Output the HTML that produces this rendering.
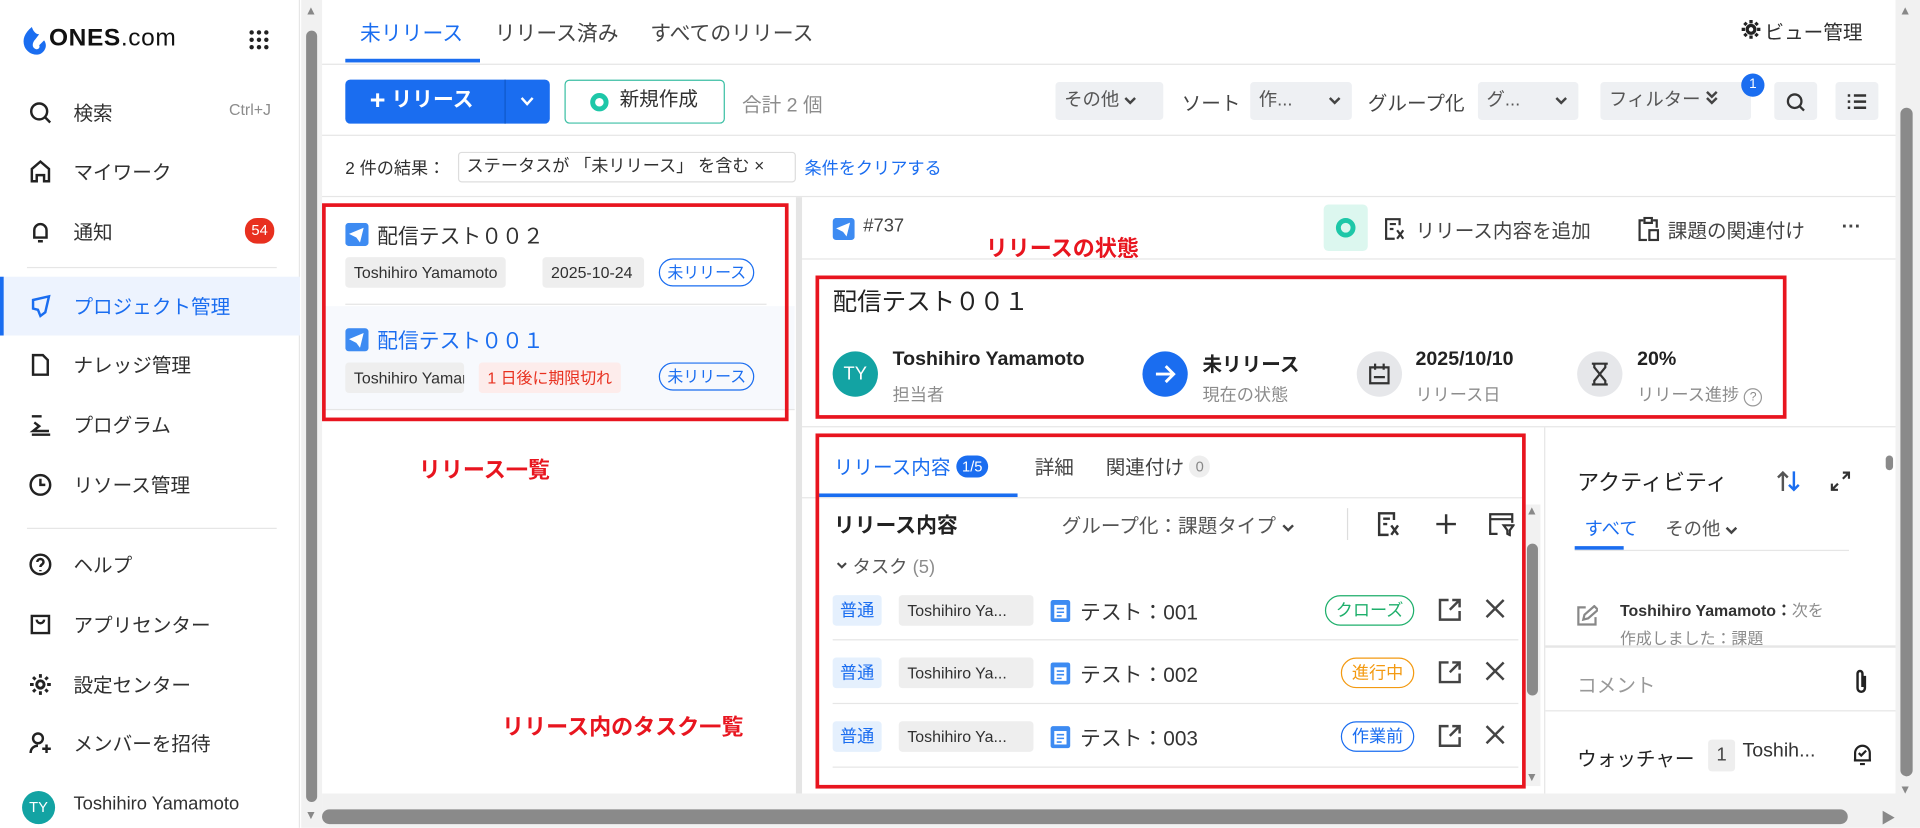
<!DOCTYPE html>
<html><head><meta charset="utf-8">
<style>
*{box-sizing:border-box;margin:0;padding:0}
html,body{width:1920px;height:828px;overflow:hidden;background:#fff}
body{font-family:"Liberation Sans","Noto Sans CJK JP",sans-serif;color:#303030}
#w{position:absolute;left:0;top:0;width:1568px;height:676px;transform:scale(1.22449);transform-origin:0 0;background:#fff}
.a{position:absolute;white-space:nowrap}
.nav{position:absolute;left:0;width:245px;height:44px;font-size:16px;color:#303030}
.nav .t{position:absolute;left:60px;top:9px}
.nav svg{position:absolute;left:23px;top:12px}
.line{position:absolute;background:#e6e6e6}
.tag{position:absolute;white-space:nowrap;background:#eeeeee;border-radius:3px;font-size:13px;padding:0 7px;height:25px;line-height:25px;color:#303030}
.st{position:absolute;white-space:nowrap;border:1px solid #1a6df0;color:#1a6df0;border-radius:12px;font-size:13px;height:23px;line-height:21px;padding:0 6px}
.sel{position:absolute;white-space:nowrap;background:#eef0f3;border-radius:3px;height:31px;line-height:31px;font-size:15px;color:#555;padding-left:7px}
.red{color:#e8151f;font-weight:bold;font-size:18px}
.box{position:absolute;border:3px solid #e8151f}
.grey{color:#8c8c8c}
</style></head><body><div id="w">

<!-- sidebar -->
<div class="a" style="left:0;top:0;width:245px;height:676px;border-right:1px solid #e6e6e6"></div>
<svg class="a" style="left:17px;top:21px" width="22" height="26" viewBox="0 0 22 26"><path d="M9 1C3 6 1 11 3 17c2 5 8 8 13 6 4-2 6-7 3-11l-4 4c1 2-1 4-3 3-3-1-3-5 0-8l3-4c-3 0-5-3-6-6z" fill="#1a6df0"/></svg>
<div class="a" style="left:40px;top:20px;font-size:20px;font-weight:bold;color:#111;letter-spacing:.5px">ONES<span style="font-weight:normal">.com</span></div>
<svg class="a" style="left:203px;top:24px" width="17" height="17" viewBox="0 0 17 17" fill="#222"><circle cx="2.5" cy="2.5" r="1.8"/><circle cx="8.5" cy="2.5" r="1.8"/><circle cx="14.5" cy="2.5" r="1.8"/><circle cx="2.5" cy="8.5" r="1.8"/><circle cx="8.5" cy="8.5" r="1.8"/><circle cx="14.5" cy="8.5" r="1.8"/><circle cx="2.5" cy="14.5" r="1.8"/><circle cx="8.5" cy="14.5" r="1.8"/><circle cx="14.5" cy="14.5" r="1.8"/></svg>

<div class="nav" style="top:70px"><svg width="20" height="20" viewBox="0 0 20 20" fill="none" stroke="#222" stroke-width="2"><circle cx="9" cy="9" r="6.5"/><path d="M14 14l4 4"/></svg><span class="t">検索</span><span class="a grey" style="left:187px;top:12px;font-size:13px">Ctrl+J</span></div>
<div class="nav" style="top:118px"><svg width="20" height="20" viewBox="0 0 20 20" fill="none" stroke="#222" stroke-width="2"><path d="M3 18V8l7-6 7 6v10h-4v-5H7v5z"/></svg><span class="t">マイワーク</span></div>
<div class="nav" style="top:167px"><svg width="20" height="20" viewBox="0 0 20 20" fill="none" stroke="#222" stroke-width="2"><path d="M5 15V9a5 5 0 0110 0v6H4h12M8 18h4"/></svg><span class="t">通知</span><span class="a" style="left:200px;top:11px;background:#e8301f;color:#fff;font-size:12px;border-radius:10px;width:24px;height:21px;line-height:21px;text-align:center">54</span></div>
<div class="line" style="left:22px;top:218px;width:204px;height:1px"></div>
<div class="nav" style="top:226px;height:48px;background:#edf3fe;color:#1a6df0"><div class="a" style="left:0;top:0;width:3px;height:48px;background:#1a6df0"></div><svg width="20" height="20" viewBox="0 0 20 20" fill="none" stroke="#1a6df0" stroke-width="2" style="top:14px"><path d="M4 5l13-3-3 13-4 3-2-5-4-1z"/></svg><span class="t" style="top:11px">プロジェクト管理</span></div>
<div class="nav" style="top:276px"><svg width="20" height="20" viewBox="0 0 20 20" fill="none" stroke="#222" stroke-width="2"><path d="M4 2h8l4 4v12H4z"/></svg><span class="t">ナレッジ管理</span></div>
<div class="nav" style="top:325px"><svg width="20" height="20" viewBox="0 0 20 20" fill="none" stroke="#222" stroke-width="2"><path d="M3 3h8M5 8l4 3-5 4h13M3 18h15"/></svg><span class="t">プログラム</span></div>
<div class="nav" style="top:374px"><svg width="20" height="20" viewBox="0 0 20 20" fill="none" stroke="#222" stroke-width="2"><circle cx="10" cy="10" r="8"/><path d="M10 5v5h4"/></svg><span class="t">リソース管理</span></div>
<div class="line" style="left:22px;top:431px;width:204px;height:1px"></div>
<div class="nav" style="top:439px"><svg width="20" height="20" viewBox="0 0 20 20" fill="none" stroke="#222" stroke-width="2"><circle cx="10" cy="10" r="8"/><path d="M7.5 8a2.5 2.5 0 115 0c0 2-2.5 2-2.5 4M10 14.5v1"/></svg><span class="t">ヘルプ</span></div>
<div class="nav" style="top:488px"><svg width="20" height="20" viewBox="0 0 20 20" fill="none" stroke="#222" stroke-width="2"><path d="M3 3h14v14H3zM7 6a3 3 0 006 0"/></svg><span class="t">アプリセンター</span></div>
<div class="nav" style="top:537px"><svg width="20" height="20" viewBox="0 0 20 20" fill="none" stroke="#222" stroke-width="2.4"><circle cx="10" cy="10" r="3"/><path d="M10 1.5v3M10 15.5v3M1.5 10h3M15.5 10h3M4 4l2 2M14 14l2 2M4 16l2-2M14 6l2-2"/></svg><span class="t">設定センター</span></div>
<div class="nav" style="top:585px"><svg width="20" height="20" viewBox="0 0 20 20" fill="none" stroke="#222" stroke-width="2"><circle cx="8" cy="6" r="4"/><path d="M2 18c0-4 3-6 6-6M15 11v7M11.5 14.5h7"/></svg><span class="t">メンバーを招待</span></div>
<div class="a" style="left:18px;top:646px;width:27px;height:27px;border-radius:50%;background:#13a3a3;color:#fff;font-size:12px;line-height:27px;text-align:center">TY</div>
<div class="a" style="left:60px;top:648px;font-size:15px">Toshihiro Yamamoto</div>

<!-- scrollbars -->
<div class="a" style="left:246px;top:0;width:17px;height:676px;background:#f1f1f1"></div>
<div class="a" style="left:250px;top:25px;width:9px;height:630px;background:#8a8a8a;border-radius:5px"></div>
<div class="a" style="left:249px;top:4px;color:#888;font-size:10px">▲</div>
<div class="a" style="left:249px;top:661px;color:#888;font-size:10px">▼</div>
<div class="a" style="left:1548px;top:0;width:20px;height:676px;background:#f1f1f1"></div>
<div class="a" style="left:1552px;top:88px;width:10px;height:546px;background:#8a8a8a;border-radius:5px"></div>
<div class="a" style="left:1551px;top:4px;color:#888;font-size:10px">▲</div>
<div class="a" style="left:1551px;top:640px;color:#888;font-size:10px">▼</div>
<div class="a" style="left:263px;top:648px;width:1285px;height:28px;background:#f1f1f1"></div>
<div class="a" style="left:263px;top:661px;width:1246px;height:12px;background:#8a8a8a;border-radius:6px"></div>
<div class="a" style="left:1536px;top:659px;color:#888;font-size:12px">▶</div>

<!-- top tabs -->
<div class="a" style="left:294px;top:13px;font-size:17px;color:#1a6df0">未リリース</div>
<div class="a" style="left:404px;top:13px;font-size:17px;color:#444">リリース済み</div>
<div class="a" style="left:531px;top:13px;font-size:17px;color:#444">すべてのリリース</div>
<div class="a" style="left:282px;top:48px;width:110px;height:3px;background:#1a6df0"></div>
<div class="line" style="left:263px;top:52px;width:1285px;height:1px"></div>
<svg class="a" style="left:1421px;top:15px" width="18" height="18" viewBox="0 0 20 20" fill="none" stroke="#222" stroke-width="3"><circle cx="10" cy="10" r="3.5"/><path d="M10 1.5v3M10 15.5v3M1.5 10h3M15.5 10h3M4 4l2 2M14 14l2 2M4 16l2-2M14 6l2-2"/></svg>
<div class="a" style="left:1441px;top:13px;font-size:16px">ビュー管理</div>

<!-- toolbar -->
<div class="a" style="left:282px;top:65px;width:167px;height:36px;background:#1a6df0;border-radius:4px;color:#fff;font-size:17px;line-height:34px;font-weight:bold"><span style="margin-left:20px;font-size:22px;vertical-align:-2px">+</span> リリース<div class="a" style="left:130px;top:0;width:1px;height:36px;background:#0f58c9"></div><svg class="a" style="left:143px;top:14px" width="11" height="8" viewBox="0 0 11 8" fill="none" stroke="#fff" stroke-width="2"><path d="M1 1l4.5 5L10 1"/></svg></div>
<div class="a" style="left:461px;top:65px;width:131px;height:36px;border:1px solid #3bbfa4;border-radius:4px;font-size:16px;line-height:32px"><span class="a" style="left:20px;top:10px;width:15px;height:15px;border-radius:50%;border:4px solid #1ec7a8"></span><span style="margin-left:44px">新規作成</span></div>
<div class="a grey" style="left:606px;top:72px;font-size:16px">合計 2 個</div>
<div class="sel" style="left:862px;top:67px;width:88px;line-height:29px">その他 <svg width="10" height="7" viewBox="0 0 10 7" fill="none" stroke="#444" stroke-width="2"><path d="M1 1l4 4 4-4"/></svg></div>
<div class="a" style="left:965px;top:71px;font-size:16px;color:#444">ソート</div>
<div class="sel" style="left:1021px;top:67px;width:83px;line-height:29px">作... <svg class="a" style="left:64px;top:12px" width="10" height="7" viewBox="0 0 10 7" fill="none" stroke="#444" stroke-width="2"><path d="M1 1l4 4 4-4"/></svg></div>
<div class="a" style="left:1117px;top:71px;font-size:16px;color:#444">グループ化</div>
<div class="sel" style="left:1207px;top:67px;width:82px;line-height:29px">グ... <svg class="a" style="left:63px;top:12px" width="10" height="7" viewBox="0 0 10 7" fill="none" stroke="#444" stroke-width="2"><path d="M1 1l4 4 4-4"/></svg></div>
<div class="sel" style="left:1307px;top:67px;width:123px;line-height:29px">フィルター <svg width="10" height="12" viewBox="0 0 10 12" fill="none" stroke="#444" stroke-width="2"><path d="M1 1l4 4 4-4M1 6l4 4 4-4"/></svg></div>
<div class="a" style="left:1422px;top:60px;width:19px;height:19px;border-radius:50%;background:#1a6df0;color:#fff;font-size:11px;line-height:19px;text-align:center">1</div>
<div class="sel" style="left:1449px;top:67px;width:35px;padding:0"><svg class="a" style="left:9px;top:8px" width="17" height="17" viewBox="0 0 20 20" fill="none" stroke="#333" stroke-width="2.2"><circle cx="9" cy="9" r="6.5"/><path d="M14 14l4 4"/></svg></div>
<div class="sel" style="left:1499px;top:67px;width:35px;padding:0"><svg class="a" style="left:9px;top:9px" width="17" height="14" viewBox="0 0 17 14" fill="none" stroke="#333" stroke-width="2"><path d="M1 2h2M6 2h10M1 7h2M6 7h10M1 12h2M6 12h10"/></svg></div>
<div class="line" style="left:263px;top:110px;width:1285px;height:1px"></div>

<!-- filter row -->
<div class="a" style="left:282px;top:127px;font-size:14px">2 件の結果：</div>
<div class="a" style="left:374px;top:124px;width:276px;height:25px;border:1px solid #ddd;border-radius:3px;font-size:14px;line-height:21px;padding-left:6px">ステータスが 「未リリース」 を含む ×</div>
<div class="a" style="left:657px;top:127px;font-size:14px;color:#1a6df0">条件をクリアする</div>
<div class="line" style="left:263px;top:160px;width:1285px;height:1px"></div>

<!-- list -->
<div class="a" style="left:263px;top:250px;width:386px;height:84px;background:#f7f9fd"></div>
<div class="line" style="left:282px;top:248px;width:344px;height:1px"></div>
<div class="line" style="left:263px;top:334px;width:386px;height:1px"></div>
<svg class="a" style="left:282px;top:182px" width="19" height="19" viewBox="0 0 19 19"><rect width="19" height="19" rx="3" fill="#3d8bf2"/><path d="M3 9l12-5-3 12-3-4z" fill="#fff"/></svg>
<div class="a" style="left:308px;top:179px;font-size:17px">配信テスト００２</div>
<div class="tag" style="left:282px;top:210px">Toshihiro Yamamoto</div>
<div class="tag" style="left:443px;top:210px;width:83px;overflow:hidden">2025-10-24</div>
<div class="st" style="left:538px;top:211px">未リリース</div>
<svg class="a" style="left:282px;top:268px" width="19" height="19" viewBox="0 0 19 19"><rect width="19" height="19" rx="3" fill="#3d8bf2"/><path d="M3 9l12-5-3 12-3-4z" fill="#fff"/></svg>
<div class="a" style="left:308px;top:264px;font-size:17px;color:#1a6df0">配信テスト００１</div>
<div class="tag" style="left:282px;top:296px;width:97px;overflow:hidden">Toshihiro Yamamoto</div>
<div class="tag" style="left:391px;top:296px;background:#fdeceb;color:#e8301f">1 日後に期限切れ</div>
<div class="st" style="left:538px;top:296px">未リリース</div>
<div class="box" style="left:263px;top:166px;width:381px;height:178px"></div>
<div class="a red" style="left:342px;top:370px">リリース一覧</div>
<div class="a red" style="left:410px;top:580px">リリース内のタスク一覧</div>

<div class="a" style="left:650px;top:161px;width:5px;height:487px;background:#e5e5e5"></div>

<!-- detail header -->
<svg class="a" style="left:680px;top:178px" width="18" height="18" viewBox="0 0 19 19"><rect width="19" height="19" rx="3" fill="#3d8bf2"/><path d="M3 9l12-5-3 12-3-4z" fill="#fff"/></svg>
<div class="a" style="left:705px;top:176px;font-size:15px;color:#444">#737</div>
<div class="a red" style="left:805px;top:189px">リリースの状態</div>
<div class="a" style="left:1081px;top:167px;width:36px;height:38px;background:#dcf7ef;border-radius:4px"><span class="a" style="left:10px;top:11px;width:16px;height:16px;border-radius:50%;border:4px solid #1ec7a8"></span></div>
<svg class="a" style="left:1130px;top:177px" width="18" height="20" viewBox="0 0 18 20" fill="none" stroke="#333" stroke-width="1.8"><path d="M13 7V2H2v16h7M5 6h5M5 10h3M11 11l5 7M16 11l-5 7"/></svg>
<div class="a" style="left:1156px;top:175px;font-size:16px;color:#444">リリース内容を追加</div>
<svg class="a" style="left:1337px;top:177px" width="18" height="20" viewBox="0 0 18 20" fill="none" stroke="#333" stroke-width="1.8"><path d="M5 3H2v16h6M6 1h6v4H6zM13 3h3v6M10 11h7v8h-7z"/></svg>
<div class="a" style="left:1362px;top:175px;font-size:16px;color:#444">課題の関連付け</div>
<div class="a" style="left:1504px;top:177px;font-size:16px;color:#444;font-weight:bold">···</div>
<div class="line" style="left:655px;top:211px;width:893px;height:1px"></div>

<div class="a" style="left:680px;top:230px;font-size:20px;color:#222">配信テスト００１</div>
<div class="a" style="left:680px;top:287px;width:37px;height:37px;border-radius:50%;background:#13a3a3;color:#fff;font-size:15px;line-height:37px;text-align:center">TY</div>
<div class="a" style="left:729px;top:285px;font-size:16px;font-weight:bold;color:#222">Toshihiro Yamamoto</div>
<div class="a grey" style="left:729px;top:312px;font-size:14px">担当者</div>
<div class="a" style="left:933px;top:287px;width:37px;height:37px;border-radius:50%;background:#1a6df0"><svg class="a" style="left:9px;top:9px" width="19" height="19" viewBox="0 0 19 19" fill="none" stroke="#fff" stroke-width="2.4"><path d="M2 9.5h14M10 3l6.5 6.5L10 16"/></svg></div>
<div class="a" style="left:982px;top:284px;font-size:16px;font-weight:bold;color:#222">未リリース</div>
<div class="a grey" style="left:982px;top:312px;font-size:14px">現在の状態</div>
<div class="a" style="left:1108px;top:287px;width:37px;height:37px;border-radius:50%;background:#e6e7ea"><svg class="a" style="left:10px;top:9px" width="17" height="18" viewBox="0 0 17 18" fill="none" stroke="#333" stroke-width="1.8"><path d="M1 4h15v13H1zM5 1v5M12 1v5M4 12h9"/></svg></div>
<div class="a" style="left:1156px;top:285px;font-size:16px;font-weight:bold;color:#222">2025/10/10</div>
<div class="a grey" style="left:1156px;top:312px;font-size:14px">リリース日</div>
<div class="a" style="left:1288px;top:287px;width:37px;height:37px;border-radius:50%;background:#e6e7ea"><svg class="a" style="left:11px;top:9px" width="15" height="19" viewBox="0 0 15 19" fill="none" stroke="#333" stroke-width="1.8"><path d="M1 1h13M1 18h13M3 1v3l4.5 5.5L3 15v3M12 1v3L7.5 9.5 12 15v3"/></svg></div>
<div class="a" style="left:1337px;top:285px;font-size:16px;font-weight:bold;color:#222">20%</div>
<div class="a grey" style="left:1337px;top:312px;font-size:14px">リリース進捗 <span style="display:inline-block;width:15px;height:15px;border:1px solid #999;border-radius:50%;font-size:10px;text-align:center;line-height:13px">?</span></div>
<div class="box" style="left:666px;top:225px;width:793px;height:117px"></div>
<div class="line" style="left:655px;top:348px;width:893px;height:1px"></div>

<!-- lower left panel -->
<div class="a" style="left:681px;top:368px;font-size:16px;color:#1a6df0">リリース内容 <span style="display:inline-block;background:#1a6df0;color:#fff;border-radius:9px;font-size:12px;padding:0 5px;line-height:18px;vertical-align:2px">1/5</span></div>
<div class="a" style="left:845px;top:368px;font-size:16px;color:#444">詳細</div>
<div class="a" style="left:903px;top:368px;font-size:16px;color:#444">関連付け <span style="display:inline-block;background:#eee;color:#888;border-radius:9px;font-size:12px;padding:0 5px;line-height:18px;vertical-align:2px">0</span></div>
<div class="a" style="left:668px;top:403px;width:163px;height:3px;background:#1a6df0"></div>
<div class="line" style="left:655px;top:406px;width:590px;height:1px"></div>
<div class="a" style="left:681px;top:415px;font-size:17px;font-weight:bold;color:#222">リリース内容</div>
<div class="a" style="left:867px;top:416px;font-size:16px;color:#555">グループ化：課題タイプ <svg width="10" height="7" viewBox="0 0 10 7" fill="none" stroke="#444" stroke-width="2"><path d="M1 1l4 4 4-4"/></svg></div>
<div class="a" style="left:1100px;top:415px;width:1px;height:26px;background:#ddd"></div>
<svg class="a" style="left:1124px;top:417px" width="20" height="22" viewBox="0 0 18 20" fill="none" stroke="#333" stroke-width="1.8"><path d="M13 7V2H2v16h7M5 6h5M5 10h3M11 11l5 7M16 11l-5 7"/></svg>
<svg class="a" style="left:1172px;top:419px" width="18" height="18" viewBox="0 0 18 18" stroke="#333" stroke-width="2"><path d="M9 1v16M1 9h16"/></svg>
<svg class="a" style="left:1215px;top:418px" width="22" height="20" viewBox="0 0 22 20" fill="none" stroke="#333" stroke-width="1.8"><path d="M8 18H2V2h18v7M2 6h18M13 11h8l-3 4v4l-2-1v-3z"/></svg>
<div class="a" style="left:683px;top:452px;font-size:15px;color:#555"><svg width="9" height="6" viewBox="0 0 10 7" fill="none" stroke="#444" stroke-width="2" style="vertical-align:3px"><path d="M1 1l4 4 4-4"/></svg> タスク <span class="grey">(5)</span></div>

<div class="a" style="left:1246px;top:412px;width:12px;height:230px;background:#f1f1f1"></div>
<div class="a" style="left:1247px;top:444px;width:9px;height:124px;background:#8a8a8a;border-radius:5px"></div>
<div class="a" style="left:1246px;top:412px;color:#888;font-size:10px">▲</div>
<div class="a" style="left:1246px;top:630px;color:#888;font-size:10px">▼</div>

<!-- rows -->
<div class="a" style="left:680px;top:486px;width:40px;height:25px;background:#e5f0fd;color:#1a6df0;border-radius:3px;font-size:14px;line-height:24px;text-align:center">普通</div>
<div class="tag" style="left:734px;top:486px;width:110px;overflow:hidden">Toshihiro Ya...</div>
<svg class="a" style="left:857px;top:488px" width="18" height="21" viewBox="0 0 18 21"><rect x="1" y="2" width="16" height="18" rx="2" fill="#3d8bf2"/><rect x="4" y="6" width="10" height="11" fill="#fff"/><path d="M6 9h6M6 12h6M6 15h4" stroke="#3d8bf2" stroke-width="1.3"/></svg>
<div class="a" style="left:882px;top:486px;font-size:17px;color:#333">テスト：001</div>
<div class="a" style="left:1082px;top:486px;width:73px;height:25px;border:1px solid #1eaf6b;color:#1eaf6b;border-radius:13px;font-size:14px;line-height:22px;text-align:center">クローズ</div>

<div class="line" style="left:680px;top:522px;width:560px;height:1px"></div>
<div class="a" style="left:680px;top:537px;width:40px;height:25px;background:#e5f0fd;color:#1a6df0;border-radius:3px;font-size:14px;line-height:24px;text-align:center">普通</div>
<div class="tag" style="left:734px;top:537px;width:110px;overflow:hidden">Toshihiro Ya...</div>
<svg class="a" style="left:857px;top:539px" width="18" height="21" viewBox="0 0 18 21"><rect x="1" y="2" width="16" height="18" rx="2" fill="#3d8bf2"/><rect x="4" y="6" width="10" height="11" fill="#fff"/><path d="M6 9h6M6 12h6M6 15h4" stroke="#3d8bf2" stroke-width="1.3"/></svg>
<div class="a" style="left:882px;top:537px;font-size:17px;color:#333">テスト：002</div>
<div class="a" style="left:1095px;top:537px;width:60px;height:25px;border:1px solid #f39a12;color:#f39a12;border-radius:13px;font-size:14px;line-height:22px;text-align:center">進行中</div>

<div class="line" style="left:680px;top:574px;width:560px;height:1px"></div>
<div class="a" style="left:680px;top:589px;width:40px;height:25px;background:#e5f0fd;color:#1a6df0;border-radius:3px;font-size:14px;line-height:24px;text-align:center">普通</div>
<div class="tag" style="left:734px;top:589px;width:110px;overflow:hidden">Toshihiro Ya...</div>
<svg class="a" style="left:857px;top:591px" width="18" height="21" viewBox="0 0 18 21"><rect x="1" y="2" width="16" height="18" rx="2" fill="#3d8bf2"/><rect x="4" y="6" width="10" height="11" fill="#fff"/><path d="M6 9h6M6 12h6M6 15h4" stroke="#3d8bf2" stroke-width="1.3"/></svg>
<div class="a" style="left:882px;top:589px;font-size:17px;color:#333">テスト：003</div>
<div class="a" style="left:1095px;top:589px;width:60px;height:25px;border:1px solid #1a6df0;color:#1a6df0;border-radius:13px;font-size:14px;line-height:22px;text-align:center">作業前</div>
<div class="line" style="left:680px;top:626px;width:560px;height:1px"></div>

<svg class="a" style="left:1174px;top:488px" width="20" height="20" viewBox="0 0 20 20" fill="none" stroke="#444" stroke-width="2"><path d="M9 2H2v16h16v-7M12 2h6v6M18 2l-8 8"/></svg>
<svg class="a" style="left:1213px;top:489px" width="16" height="16" viewBox="0 0 16 16" stroke="#444" stroke-width="2"><path d="M1 1l14 14M15 1L1 15"/></svg>
<svg class="a" style="left:1174px;top:539px" width="20" height="20" viewBox="0 0 20 20" fill="none" stroke="#444" stroke-width="2"><path d="M9 2H2v16h16v-7M12 2h6v6M18 2l-8 8"/></svg>
<svg class="a" style="left:1213px;top:540px" width="16" height="16" viewBox="0 0 16 16" stroke="#444" stroke-width="2"><path d="M1 1l14 14M15 1L1 15"/></svg>
<svg class="a" style="left:1174px;top:591px" width="20" height="20" viewBox="0 0 20 20" fill="none" stroke="#444" stroke-width="2"><path d="M9 2H2v16h16v-7M12 2h6v6M18 2l-8 8"/></svg>
<svg class="a" style="left:1213px;top:592px" width="16" height="16" viewBox="0 0 16 16" stroke="#444" stroke-width="2"><path d="M1 1l14 14M15 1L1 15"/></svg>

<div class="box" style="left:666px;top:354px;width:580px;height:290px"></div>

<!-- right panel -->
<div class="a" style="left:1261px;top:349px;width:1px;height:299px;background:#e6e6e6"></div>
<div class="a" style="left:1288px;top:380px;font-size:18px;color:#222">アクティビティ</div>
<svg class="a" style="left:1451px;top:384px" width="20" height="18" viewBox="0 0 20 18" fill="none" stroke-width="2"><path d="M5 17V2M1 6l4-4 4 4" stroke="#555"/><path d="M14 1v15M10 12l4 4 4-4" stroke="#1a6df0"/></svg>
<svg class="a" style="left:1495px;top:385px" width="16" height="16" viewBox="0 0 16 16" fill="none" stroke="#333" stroke-width="1.8"><path d="M10 1h5v5M15 1l-5 5M6 15H1v-5M1 15l5-5"/></svg>
<div class="a" style="left:1294px;top:421px;font-size:15px;color:#1a6df0">すべて</div>
<div class="a" style="left:1360px;top:421px;font-size:15px;color:#555">その他 <svg width="10" height="7" viewBox="0 0 10 7" fill="none" stroke="#444" stroke-width="2"><path d="M1 1l4 4 4-4"/></svg></div>
<div class="a" style="left:1286px;top:446px;width:40px;height:3px;background:#1a6df0"></div>
<div class="line" style="left:1286px;top:449px;width:224px;height:1px"></div>
<svg class="a" style="left:1287px;top:494px" width="18" height="18" viewBox="0 0 18 18" fill="none" stroke="#888" stroke-width="1.8"><path d="M8 2H2v14h14v-6M6 12l1-4 8-7 3 3-8 7z"/></svg>
<div class="a" style="left:1323px;top:488px;font-size:13px;color:#333"><b style="font-weight:bold">Toshihiro Yamamoto：</b><span class="grey">次を</span></div>
<div class="a grey" style="left:1323px;top:511px;font-size:13px">作成しました：課題</div>
<div class="a" style="left:1540px;top:372px;width:6px;height:12px;background:#8a8a8a;border-radius:3px"></div>
<div class="line" style="left:1262px;top:527px;width:286px;height:2px"></div>
<div class="a" style="left:1288px;top:546px;font-size:16px;color:#999">コメント</div>
<svg class="a" style="left:1512px;top:546px" width="16" height="22" viewBox="0 0 16 22" fill="none" stroke="#222" stroke-width="2"><path d="M11 6v10a3 3 0 01-6 0V4a2 2 0 014 0v11"/></svg>
<div class="line" style="left:1262px;top:580px;width:286px;height:1px"></div>
<div class="a" style="left:1288px;top:606px;font-size:16px;color:#222">ウォッチャー</div>
<div class="a" style="left:1395px;top:604px;width:22px;height:26px;background:#eee;border-radius:3px;font-size:15px;text-align:center;line-height:26px;color:#444">1</div>
<div class="a" style="left:1423px;top:605px;font-size:16px;color:#333">Toshih...</div>
<svg class="a" style="left:1512px;top:606px" width="18" height="20" viewBox="0 0 18 20" fill="none" stroke="#222" stroke-width="1.8"><path d="M3 15V9a6 6 0 0112 0v6H2h14M7 18h4M6 9l2 2 4-4"/></svg>

</div></body></html>
